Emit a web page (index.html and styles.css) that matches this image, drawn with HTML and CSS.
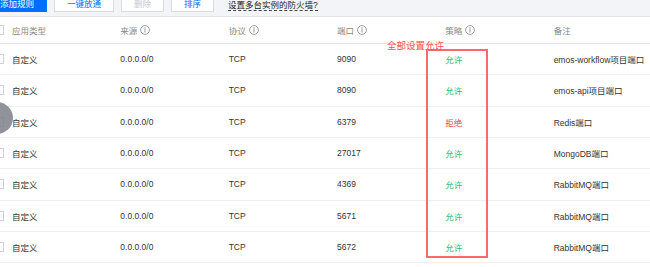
FILE: index.html
```html
<!DOCTYPE html>
<html lang="zh">
<head>
<meta charset="utf-8">
<link rel="stylesheet" href="styles.css">
</head>
<body>
<div class="page">
  <div class="toolbar">
    <button class="btn btn-primary">添加规则</button>
    <button class="btn">一键放通</button>
    <button class="btn btn-disabled">删除</button>
    <button class="btn">排序</button>
    <a class="help-link">设置多台实例的防火墙?</a>
  </div>
  <div class="table">
    <div class="row head">
      <span class="check"></span>
      <span>应用类型</span>
      <span>来源 <svg class="info" viewBox="0 0 10 10"><circle cx="5" cy="5" r="4.4" fill="none" stroke="#888" stroke-width="0.8"/><rect x="4.55" y="4.2" width="0.9" height="3.3" fill="#888"/><circle cx="5" cy="2.9" r="0.6" fill="#888"/></svg></span>
      <span>协议 <svg class="info" viewBox="0 0 10 10"><circle cx="5" cy="5" r="4.4" fill="none" stroke="#888" stroke-width="0.8"/><rect x="4.55" y="4.2" width="0.9" height="3.3" fill="#888"/><circle cx="5" cy="2.9" r="0.6" fill="#888"/></svg></span>
      <span>端口 <svg class="info" viewBox="0 0 10 10"><circle cx="5" cy="5" r="4.4" fill="none" stroke="#888" stroke-width="0.8"/><rect x="4.55" y="4.2" width="0.9" height="3.3" fill="#888"/><circle cx="5" cy="2.9" r="0.6" fill="#888"/></svg></span>
      <span>策略 <svg class="info" viewBox="0 0 10 10"><circle cx="5" cy="5" r="4.4" fill="none" stroke="#888" stroke-width="0.8"/><rect x="4.55" y="4.2" width="0.9" height="3.3" fill="#888"/><circle cx="5" cy="2.9" r="0.6" fill="#888"/></svg></span>
      <span>备注</span>
    </div>
    <div class="row"><span class="check"></span><span>自定义</span><span>0.0.0.0/0</span><span>TCP</span><span>9090</span><span class="allow">允许</span><span>emos-workflow项目端口</span></div>
    <div class="row"><span class="check"></span><span>自定义</span><span>0.0.0.0/0</span><span>TCP</span><span>8090</span><span class="allow">允许</span><span>emos-api项目端口</span></div>
    <div class="row"><span class="check"></span><span>自定义</span><span>0.0.0.0/0</span><span>TCP</span><span>6379</span><span class="deny">拒绝</span><span>Redis端口</span></div>
    <div class="row"><span class="check"></span><span>自定义</span><span>0.0.0.0/0</span><span>TCP</span><span>27017</span><span class="allow">允许</span><span>MongoDB端口</span></div>
    <div class="row"><span class="check"></span><span>自定义</span><span>0.0.0.0/0</span><span>TCP</span><span>4369</span><span class="allow">允许</span><span>RabbitMQ端口</span></div>
    <div class="row"><span class="check"></span><span>自定义</span><span>0.0.0.0/0</span><span>TCP</span><span>5671</span><span class="allow">允许</span><span>RabbitMQ端口</span></div>
    <div class="row"><span class="check"></span><span>自定义</span><span>0.0.0.0/0</span><span>TCP</span><span>5672</span><span class="allow">允许</span><span>RabbitMQ端口</span></div>
  </div>
  <div class="annot-box"></div>
  <div class="annot-text">全部设置允许</div>
  <div class="cursor-dot"></div>
</div>
</body>
</html>
```
FILE: styles.css
```css
html, body {
  margin: 0;
  padding: 0;
  background: #fff;
}
.page {
  position: relative;
  width: 650px;
  height: 267px;
  overflow: hidden;
  font-family: "Liberation Sans", "Noto Sans CJK SC", sans-serif;
  font-size: 8.5px;
  color: #333;
}
.toolbar {
  display: flex;
  align-items: center;
  gap: 7px;
  background: #f3f4f7;
  margin-top: -3px;
  margin-left: -13px;
  padding-bottom: 4px;
  border-bottom: 1px solid #e2e3e6;
  height: 15px;
}
.btn {
  font: inherit;
  height: 15px;
  padding: 0 12px;
  border: 1px solid #dcdcdc;
  background: #fff;
  color: #006eff;
  line-height: 13px;
  border-radius: 0;
  box-sizing: border-box;
}
.btn-primary {
  background: #006eff;
  border-color: #006eff;
  color: #fff;
}
.btn-disabled {
  color: #c5c9d0;
}
.help-link {
  margin-left: 7px;
  color: #222;
  border-bottom: 1px dashed #444;
  line-height: 10px;
  margin-top: 2px;
}
.table {
  margin-left: -6px;
}
.row {
  display: grid;
  grid-template-columns: 18px repeat(6, 108.33px);
  align-items: center;
  height: 30.33px;
  border-bottom: 1px solid #eeeeee;
  white-space: nowrap;
}
.row.head {
  height: 26px;
  color: #888;
  border-bottom: 1px solid #e6e6e6;
}
.row span {
  display: flex;
  align-items: center;
  gap: 3px;
}
.check {
  width: 10px;
  height: 10px;
  box-sizing: border-box;
  border: 1px solid #cfd2d6;
  background: #fff;
}
.info {
  width: 10px;
  height: 10px;
}
.allow {
  color: #2fba6a;
}
.deny {
  color: #e54545;
}
.annot-box {
  position: absolute;
  left: 426px;
  top: 49px;
  width: 62px;
  height: 209px;
  box-sizing: border-box;
  border: 2px solid rgba(250, 80, 80, 0.85);
}
.annot-text {
  position: absolute;
  left: 387px;
  top: 40px;
  font-size: 9.5px;
  line-height: 12px;
  color: #ff5050;
}
.cursor-dot {
  position: absolute;
  left: -19px;
  top: 102px;
  width: 32px;
  height: 32px;
  border-radius: 50%;
  background: rgba(125, 128, 135, 0.85);
}
```
